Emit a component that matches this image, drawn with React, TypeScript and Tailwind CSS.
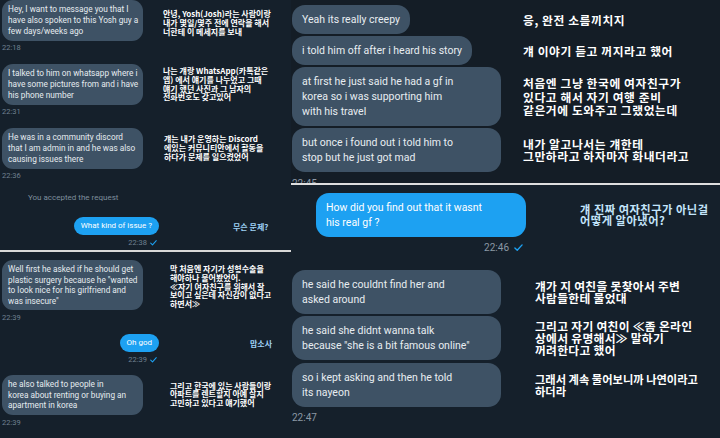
import React from "react";

const Lines = ({ lines }: { lines: string[] }) => (
  <>
    {lines.map((l, i) => (
      <div key={i} className="whitespace-nowrap">
        {l}
      </div>
    ))}
  </>
);

const Check = ({ size = 8 }: { size?: number }) => (
  <svg width={size} height={size * 0.8} viewBox="0 0 10 8">
    <path
      d="M1 4.4 3.6 7 9 1"
      fill="none"
      stroke="#1da1f2"
      strokeWidth="1.5"
      strokeLinecap="round"
      strokeLinejoin="round"
    />
  </svg>
);

// left panel pieces
const SmallBubble = ({ lines, lh = "leading-[11px]" }: { lines: string[]; lh?: string }) => (
  <div
    className={`w-[141px] shrink-0 rounded-[11px] bg-[#3e5265] px-[6px] py-[4px] text-[8.25px] text-[#e6ecf0] ${lh}`}
  >
    <Lines lines={lines} />
  </div>
);

const SmallKo = ({ lines, className = "" }: { lines: string[]; className?: string }) => (
  <div
    className={`shrink-0 font-['Noto_Sans_CJK_KR',sans-serif] text-[8px] font-bold leading-[8.75px] text-white ${className}`}
  >
    <Lines lines={lines} />
  </div>
);

const SmallTime = ({ t, className = "" }: { t: string; className?: string }) => (
  <div className={`text-[7.5px] leading-[10px] text-[#6f8191] ${className}`}>{t}</div>
);

// right panel pieces
const BigBubble = ({ lines, wide = true }: { lines: string[]; wide?: boolean }) => (
  <div
    className={`${wide ? "w-[209px]" : "w-fit"} rounded-[13px] bg-[#3e5265] px-[10px] py-[7px] text-[10.5px] leading-[15px] text-[#e8edf1]`}
  >
    <Lines lines={lines} />
  </div>
);

const BigKo = ({ lines, className = "" }: { lines: string[]; className?: string }) => (
  <div
    className={`shrink-0 font-['Noto_Sans_CJK_KR',sans-serif] text-[11.75px] font-bold text-white ${className}`}
  >
    <Lines lines={lines} />
  </div>
);

export default function App() {
  return (
    <div className="flex h-[438px] w-[720px] overflow-hidden bg-[#15202b] font-['Roboto',sans-serif]">
      {/* left column */}
      <div className="flex w-[291px] shrink-0 flex-col">
        <div className="flex h-[250px] flex-col overflow-hidden pl-[2px]">
          <div className="flex items-center">
            <SmallBubble
              lines={[
                "Hey, I want to message you that I",
                "have also spoken to this Yosh guy a",
                "few days/weeks ago",
              ]}
            />
            <SmallKo
              className="ml-[20px] pt-[6px]"
              lines={[
                "안녕, Yosh(Josh)라는 사람이랑",
                "내가 몇일/몇주 전에 연락을 해서",
                "너한테 이 메세지를 보내",
              ]}
            />
          </div>
          <SmallTime t="22:18" className="mt-[2px]" />

          <div className="mt-[11px] flex items-center">
            <SmallBubble
              lines={[
                "I talked to him on whatsapp where i",
                "have some pictures from and i have",
                "his phone number",
              ]}
            />
            <SmallKo
              className="ml-[20px]"
              lines={[
                "나는 걔랑 WhatsApp(카톡같은",
                "앱) 에서 얘기를 나누었고 그때",
                "얘기 했던 사진과 그 남자의",
                "전화번호도 갖고있어",
              ]}
            />
          </div>
          <SmallTime t="22:31" className="mt-[2px]" />

          <div className="mt-[11px] flex items-center">
            <SmallBubble
              lines={[
                "He was in a community discord",
                "that I am admin in and he was also",
                "causing issues there",
              ]}
            />
            <SmallKo
              className="ml-[21px]"
              lines={[
                "걔는 내가 운영하는 Discord",
                "에있는 커뮤니티안에서 활동을",
                "하다가 문제를 일으켰었어",
              ]}
            />
          </div>
          <SmallTime t="22:36" className="mt-[2px]" />

          <div className="ml-[26px] mt-[12px] text-[8px] leading-[10px] text-[#7d8e9c]">
            You accepted the request
          </div>

          <div className="mt-[14px] flex items-center">
            <div className="flex w-[157px] shrink-0 justify-end">
              <div className="rounded-[9px] bg-[#1da1f2] px-[7px] py-[4px] text-[8px] leading-[10px] text-white">
                What kind of issue ?
              </div>
            </div>
            <SmallKo className="ml-[74px] pt-[2px] !text-[#9fd2f6]" lines={["무슨 문제?"]} />
          </div>
          <div className="mt-[3px] flex w-[155px] items-center justify-end gap-[3px]">
            <SmallTime t="22:38" />
            <Check size={7} />
          </div>
        </div>

        <div className="h-[2px] bg-[#d8d8d8]" />

        <div className="flex flex-1 flex-col overflow-hidden pl-[2px] pt-[8px]">
          <div className="flex items-center">
            <SmallBubble
              lh="leading-[10.5px]"
              lines={[
                "Well first he asked if he should get",
                "plastic surgery because he \"wanted",
                "to look nice for his girlfriend and",
                "was insecure\"",
              ]}
            />
            <SmallKo
              className="ml-[27px] pt-[4px]"
              lines={[
                "막 처음엔 자기가 성형수술을",
                "해야하나 물어봤었어.",
                "≪자기 여자친구를 위해서 잘",
                "보이고 싶은데 자신감이 없다고",
                "하면서≫",
              ]}
            />
          </div>
          <SmallTime t="22:39" className="mt-[3px]" />

          <div className="mt-[11px] flex items-center">
            <div className="flex w-[157px] shrink-0 justify-end">
              <div className="rounded-[9px] bg-[#1da1f2] px-[7px] py-[4px] text-[8px] leading-[10px] text-white">
                Oh god
              </div>
            </div>
            <SmallKo className="ml-[91px] pt-[2px] !text-[#9fd2f6]" lines={["맙소사"]} />
          </div>
          <div className="mt-[3px] flex w-[155px] items-center justify-end gap-[3px]">
            <SmallTime t="22:39" />
            <Check size={7} />
          </div>

          <div className="mt-[10px] flex items-center">
            <SmallBubble
              lh="leading-[10.5px]"
              lines={[
                "he also talked to people in",
                "korea about renting or buying an",
                "apartment in korea",
              ]}
            />
            <SmallKo
              className="ml-[27px]"
              lines={[
                "그리고 한국에 있는 사람들이랑",
                "아파트를 렌트할지 아예 살지",
                "고민하고 있다고 얘기했어",
              ]}
            />
          </div>
          <SmallTime t="22:39" className="mt-[3px]" />
        </div>
      </div>

      {/* right column */}
      <div className="flex w-[429px] shrink-0 flex-col">
        <div className="flex h-[183px] flex-col gap-[2px] overflow-hidden bg-[#141d26] pl-[1px] pt-[5px]">
          <div className="flex items-center">
            <div className="w-[231px] shrink-0">
              <BigBubble wide={false} lines={["Yeah its really creepy"]} />
            </div>
            <BigKo className="leading-[14px] tracking-[0.6px]" lines={["응, 완전 소름끼치지"]} />
          </div>
          <div className="flex items-center">
            <div className="w-[231px] shrink-0">
              <BigBubble wide={false} lines={["i told him off after i heard his story"]} />
            </div>
            <BigKo className="leading-[14px] tracking-[0.6px]" lines={["걔 이야기 듣고 꺼지라고 했어"]} />
          </div>
          <div className="flex items-center">
            <div className="w-[231px] shrink-0">
              <BigBubble
                lines={[
                  "at first he just said he had a gf in",
                  "korea so i was supporting him",
                  "with his travel",
                ]}
              />
            </div>
            <BigKo
              className="leading-[13.5px] tracking-[0.6px]"
              lines={[
                "처음엔 그냥 한국에 여자친구가",
                "있다고 해서 자기 여행 준비",
                "같은거에 도와주고 그랬었는데",
              ]}
            />
          </div>
          <div className="flex items-center">
            <div className="w-[231px] shrink-0">
              <BigBubble
                lines={["but once i found out i told him to", "stop but he just got mad"]}
              />
            </div>
            <BigKo
              className="leading-[12.5px] tracking-[0.6px]"
              lines={["내가 알고나서는 걔한테", "그만하라고 하자마자 화내더라고"]}
            />
          </div>
          <div className="mt-[4px] text-[10px] leading-[12px] text-[#8b98a5]">22:45</div>
        </div>

        <div className="h-[2px] bg-[#dedede]" />

        <div className="flex flex-1 flex-col overflow-hidden pl-[1px]">
          <div className="mt-[8px] flex items-center">
            <div className="ml-[24px] w-[210px] shrink-0 rounded-[13px] bg-[#1da1f2] px-[10px] py-[7px] text-[10.5px] leading-[15px] text-white">
              <Lines lines={["How did you find out that it wasnt", "his real gf ?"]} />
            </div>
            <BigKo
              className="ml-[54px] !text-[11.25px] leading-[11.5px] tracking-[0.5px] !text-[#c4e5fb]"
              lines={["걔 진짜 여자친구가 아닌걸", "어떻게 알아냈어?"]}
            />
          </div>
          <div className="mt-[5px] flex w-[231px] items-center justify-end gap-[5px]">
            <span className="text-[10px] leading-[12px] text-[#8b98a5]">22:46</span>
            <Check size={9} />
          </div>

          <div className="mt-[16px] flex flex-col gap-[2px]">
            <div className="flex items-center">
              <div className="w-[243px] shrink-0">
                <BigBubble lines={["he said he couldnt find her and", "asked around"]} />
              </div>
              <BigKo
                className="leading-[12px] tracking-[0.3px]"
                lines={["걔가 지 여친을 못찾아서 주변", "사람들한테 물었대"]}
              />
            </div>
            <div className="flex items-center">
              <div className="w-[243px] shrink-0">
                <BigBubble
                  lines={["he said she didnt wanna talk", "because \"she is a bit famous online\""]}
                />
              </div>
              <BigKo
                className="leading-[11.75px] tracking-[0.3px]"
                lines={["그리고 자기 여친이 ≪좀 온라인", "상에서 유명해서≫ 말하기", "꺼려한다고 했어"]}
              />
            </div>
            <div className="mt-[1px] flex items-center">
              <div className="w-[243px] shrink-0">
                <BigBubble lines={["so i kept asking and then he told", "its nayeon"]} />
              </div>
              <BigKo
                className="!text-[11.25px] leading-[12px]"
                lines={["그래서 계속 물어보니까 나연이라고", "하더라"]}
              />
            </div>
          </div>
          <div className="mt-[5px] text-[10px] leading-[12px] text-[#8b98a5]">22:47</div>
        </div>
      </div>
    </div>
  );
}
